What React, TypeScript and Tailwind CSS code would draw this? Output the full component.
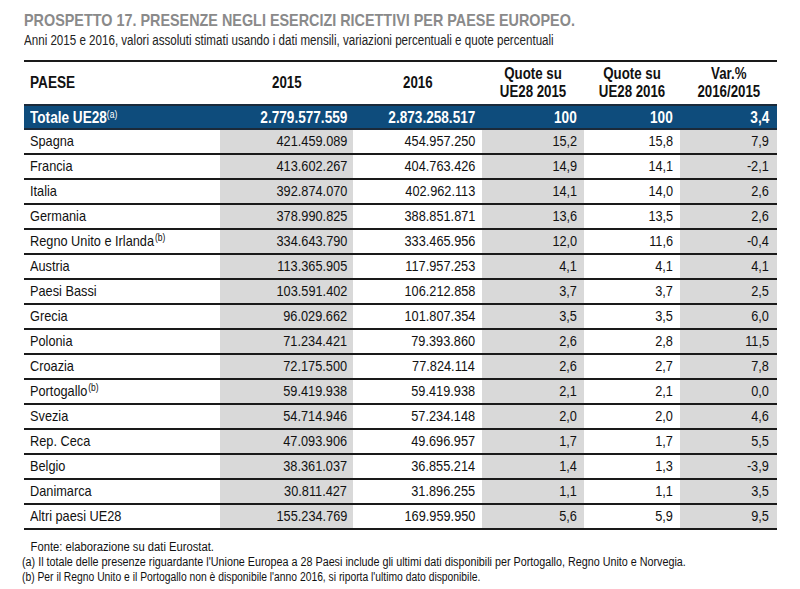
import React from "react";

// Prospetto 17 – presenze negli esercizi ricettivi per paese europeo

type Row = {
  paese: string;
  nota?: string;
  v2015: string;
  v2016: string;
  q2015: string;
  q2016: string;
  varPct: string;
};

const rows: Row[] = [
  { paese: "Spagna", v2015: "421.459.089", v2016: "454.957.250", q2015: "15,2", q2016: "15,8", varPct: "7,9" },
  { paese: "Francia", v2015: "413.602.267", v2016: "404.763.426", q2015: "14,9", q2016: "14,1", varPct: "-2,1" },
  { paese: "Italia", v2015: "392.874.070", v2016: "402.962.113", q2015: "14,1", q2016: "14,0", varPct: "2,6" },
  { paese: "Germania", v2015: "378.990.825", v2016: "388.851.871", q2015: "13,6", q2016: "13,5", varPct: "2,6" },
  { paese: "Regno Unito e Irlanda", nota: "(b)", v2015: "334.643.790", v2016: "333.465.956", q2015: "12,0", q2016: "11,6", varPct: "-0,4" },
  { paese: "Austria", v2015: "113.365.905", v2016: "117.957.253", q2015: "4,1", q2016: "4,1", varPct: "4,1" },
  { paese: "Paesi Bassi", v2015: "103.591.402", v2016: "106.212.858", q2015: "3,7", q2016: "3,7", varPct: "2,5" },
  { paese: "Grecia", v2015: "96.029.662", v2016: "101.807.354", q2015: "3,5", q2016: "3,5", varPct: "6,0" },
  { paese: "Polonia", v2015: "71.234.421", v2016: "79.393.860", q2015: "2,6", q2016: "2,8", varPct: "11,5" },
  { paese: "Croazia", v2015: "72.175.500", v2016: "77.824.114", q2015: "2,6", q2016: "2,7", varPct: "7,8" },
  { paese: "Portogallo", nota: "(b)", v2015: "59.419.938", v2016: "59.419.938", q2015: "2,1", q2016: "2,1", varPct: "0,0" },
  { paese: "Svezia", v2015: "54.714.946", v2016: "57.234.148", q2015: "2,0", q2016: "2,0", varPct: "4,6" },
  { paese: "Rep. Ceca", v2015: "47.093.906", v2016: "49.696.957", q2015: "1,7", q2016: "1,7", varPct: "5,5" },
  { paese: "Belgio", v2015: "38.361.037", v2016: "36.855.214", q2015: "1,4", q2016: "1,3", varPct: "-3,9" },
  { paese: "Danimarca", v2015: "30.811.427", v2016: "31.896.255", q2015: "1,1", q2016: "1,1", varPct: "3,5" },
  { paese: "Altri paesi UE28", v2015: "155.234.769", v2016: "169.959.950", q2015: "5,6", q2016: "5,9", varPct: "9,5" },
];

const cols = "grid grid-cols-[196px_133px_129px_102px_96px_97px]";

// no Arial Narrow installed: squeeze Liberation Sans horizontally
const L = ({ children }: { children: React.ReactNode }) => (
  <span className="inline-block whitespace-nowrap origin-left scale-x-[0.85]">{children}</span>
);
const R = ({ children }: { children: React.ReactNode }) => (
  <span className="inline-block whitespace-nowrap origin-right scale-x-[0.85]">{children}</span>
);
const C = ({ children }: { children: React.ReactNode }) => (
  <span className="inline-block whitespace-nowrap origin-center scale-x-[0.83]">{children}</span>
);

export default function App() {
  return (
    <div className="w-[800px] h-[589px] bg-white px-[24px] pt-[10px] text-[#111] font-['Liberation_Sans',Arial,sans-serif]">
      <h1 className="text-[17px] leading-[22px] font-bold text-[#8a8a8a] whitespace-nowrap origin-left scale-x-[0.846]">
        PROSPETTO 17. PRESENZE NEGLI ESERCIZI RICETTIVI PER PAESE EUROPEO.
      </h1>
      <p className="text-[14px] leading-[16px] text-[#222] whitespace-nowrap origin-left scale-x-[0.828]">
        Anni 2015 e 2016, valori assoluti stimati usando i dati mensili, variazioni percentuali e quote percentuali
      </p>

      <div className="mt-[12px] w-[753px] border-t-2 border-[#1a1a1a] text-[15px]">
        <div className={`${cols} h-[42px] items-center font-bold text-[16px] leading-[18px]`}>
          <div className="pl-[6px]"><L>PAESE</L></div>
          <div className="text-center"><C>2015</C></div>
          <div className="text-center"><C>2016</C></div>
          <div className="text-center"><C>Quote su<br />UE28 2015</C></div>
          <div className="text-center"><C>Quote su<br />UE28 2016</C></div>
          <div className="text-center"><C>Var.%<br />2016/2015</C></div>
        </div>

        <div className={`${cols} h-[26px] items-center bg-[#0e4c7c] text-white font-bold text-[16px] border-y-2 border-[#1b2a3a]`}>
          <div className="pl-[6px]">
            <L>
              Totale UE28<sup className="text-[10px] font-normal">(a)</sup>
            </L>
          </div>
          <div className="text-right pr-[6px]"><R>2.779.577.559</R></div>
          <div className="text-right pr-[7px]"><R>2.873.258.517</R></div>
          <div className="text-right pr-[7px]"><R>100</R></div>
          <div className="text-right pr-[7px]"><R>100</R></div>
          <div className="text-right pr-[8px]"><R>3,4</R></div>
        </div>

        {rows.map((r) => (
          <div key={r.paese} className={`${cols} h-[25px] border-b-2 border-[#1a1a1a]`}>
            <div className="pl-[6px] flex items-center">
              <L>
                {r.paese}
                {r.nota && <sup className="text-[10px] ml-[1px]">{r.nota}</sup>}
              </L>
            </div>
            <div className="bg-[#d9d9d9] flex items-center justify-end pr-[6px]"><R>{r.v2015}</R></div>
            <div className="flex items-center justify-end pr-[7px]"><R>{r.v2016}</R></div>
            <div className="bg-[#d9d9d9] flex items-center justify-end pr-[7px]"><R>{r.q2015}</R></div>
            <div className="flex items-center justify-end pr-[7px]"><R>{r.q2016}</R></div>
            <div className="bg-[#d9d9d9] flex items-center justify-end pr-[8px]"><R>{r.varPct}</R></div>
          </div>
        ))}
      </div>

      <div className="mt-[10px] text-[12px] leading-[15px] text-[#111] whitespace-nowrap">
        <p className="pl-[7px] origin-left scale-x-[0.935]">Fonte: elaborazione su dati Eurostat.</p>
        <p className="-ml-[2px] origin-left scale-x-[0.897]">
          (a) Il totale delle presenze riguardante l'Unione Europea a 28 Paesi include gli ultimi dati disponibili per Portogallo, Regno Unito e Norvegia.
        </p>
        <p className="-ml-[2px] origin-left scale-x-[0.86]">
          (b) Per il Regno Unito e il Portogallo non è disponibile l'anno 2016, si riporta l'ultimo dato disponibile.
        </p>
      </div>
    </div>
  );
}
